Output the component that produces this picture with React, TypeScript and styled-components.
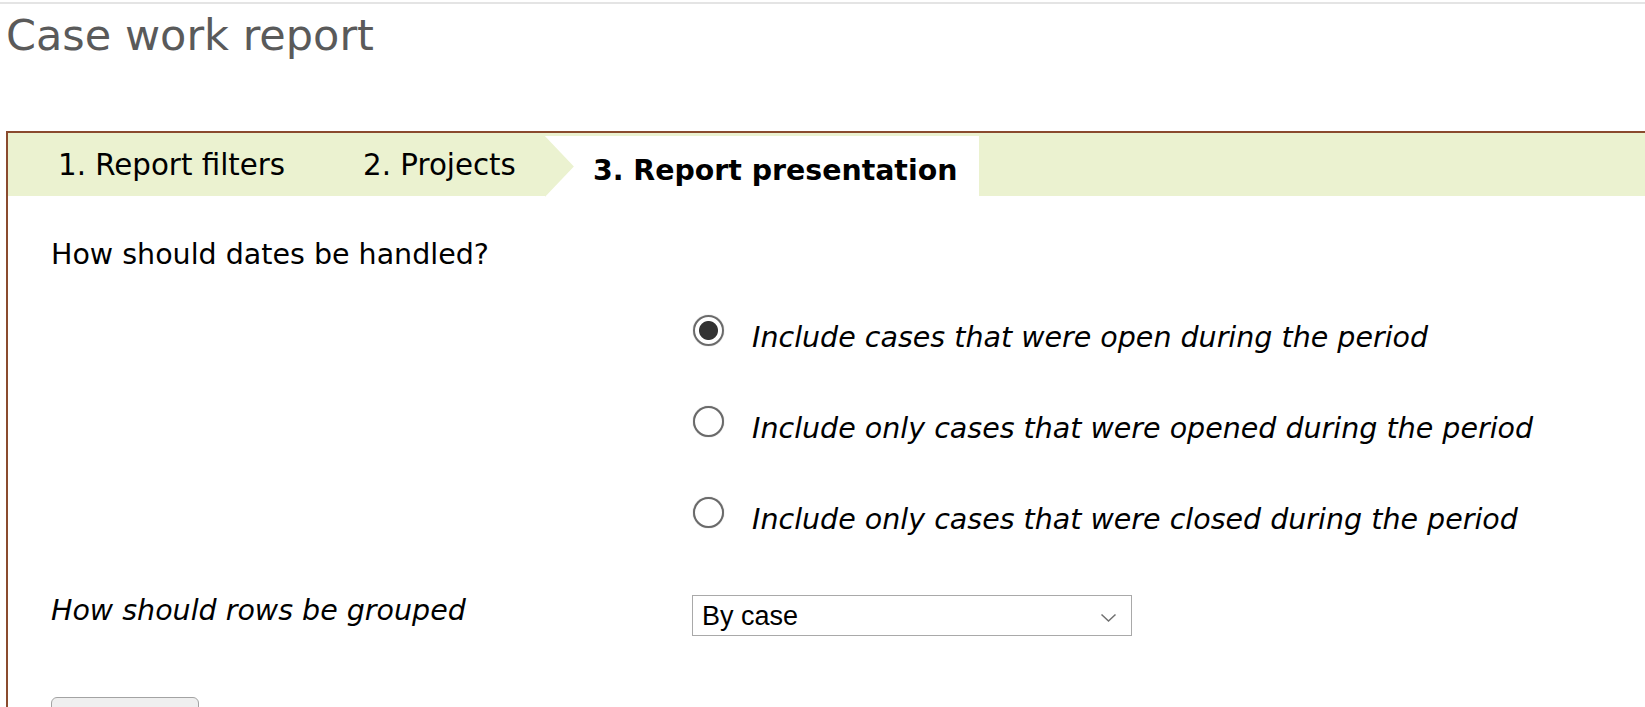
import React from "react";
import styled, { createGlobalStyle } from "styled-components";

const GlobalStyle = createGlobalStyle`
  html, body {
    margin: 0;
    padding: 0;
    background: #ffffff;
  }
  body {
    font-family: Verdana, "DejaVu Sans", sans-serif;
    color: #000000;
    overflow: hidden;
  }
`;

const Page = styled.div`
  display: flex;
  flex-direction: column;
  min-height: 707px;
`;

const TopRule = styled.div`
  height: 2px;
  margin-top: 2px;
  background: #e4e4e4;
`;

const Title = styled.h1`
  margin: 5px 0 70px 6px;
  font-size: 43px;
  line-height: 52px;
  font-weight: normal;
  color: #5a5a5a;
`;

const Panel = styled.section`
  margin-left: 6px;
  border: 2px solid #8a4b2e;
  border-right: none;
  border-bottom: none;
  flex: 1;
  display: flex;
  flex-direction: column;
`;

const TabBar = styled.nav`
  display: flex;
  align-items: stretch;
  height: 63px;
  padding-left: 11px;
  background: #ebf2d0;
`;

const Tab = styled.div`
  padding: 15px 39px 0;
  font-size: 29.3px;
  line-height: 34px;
  white-space: nowrap;
`;

const ActiveTab = styled.div`
  position: relative;
  margin: 3px 0 0 -10px;
  padding: 18px 22px 0 48px;
  background: #ffffff;
  font-size: 28.4px;
  line-height: 34px;
  font-weight: bold;
  white-space: nowrap;

  &::before {
    content: "";
    position: absolute;
    left: 0;
    top: 0;
    width: 29px;
    height: 61px;
    background: #ebf2d0;
    clip-path: polygon(0 0, 100% 50%, 0 100%);
  }
`;

const Body = styled.div`
  padding: 42px 0 0 43px;
  font-size: 28.5px;
  line-height: 34px;
`;

const Question = styled.div``;

const FormRow = styled.div<{ $top: number }>`
  display: grid;
  grid-template-columns: 641px auto;
  align-items: start;
  margin-top: ${(p) => p.$top}px;
`;

const FieldLabel = styled.div`
  font-style: italic;
`;

const RadioList = styled.div`
  display: flex;
  flex-direction: column;
  gap: 51px;
`;

const RadioRow = styled.label`
  display: flex;
  align-items: flex-start;
  gap: 28px;
  cursor: pointer;
`;

const Radio = styled.input.attrs({ type: "radio" })`
  appearance: none;
  -webkit-appearance: none;
  flex: none;
  width: 31px;
  height: 31px;
  margin: 0 0 0 1px;
  border: 2.5px solid #6a6a6a;
  border-radius: 50%;
  background: #ffffff;
  box-shadow: 0 0 1px #9a9a9a;

  &:checked {
    background: radial-gradient(circle, #333333 0 9px, #ffffff 10px);
  }
`;

const RadioText = styled.span`
  padding-top: 6px;
  font-style: italic;
  white-space: nowrap;
`;

const SelectWrap = styled.div`
  position: relative;
  width: 440px;
  margin-top: 1px;
`;

const Select = styled.select`
  appearance: none;
  -webkit-appearance: none;
  display: block;
  width: 100%;
  height: 41px;
  margin: 0;
  padding: 0 40px 0 9px;
  border: 1px solid #a9a9a9;
  border-radius: 0;
  background: #ffffff;
  font-family: Arial, "Liberation Sans", sans-serif;
  font-size: 27px;
  color: #000000;
`;

const Chevron = styled.svg`
  position: absolute;
  right: 15px;
  top: 50%;
  width: 17px;
  height: 10px;
  margin-top: -3px;
  pointer-events: none;
`;

const Actions = styled.div`
  margin-top: 61px;
  padding-bottom: 40px;
`;

const Button = styled.button`
  width: 148px;
  height: 52px;
  padding: 40px 0 0;
  border: 1.5px solid #a3a3a3;
  border-radius: 6px;
  background: #efefef;
  font-family: Verdana, "DejaVu Sans", sans-serif;
  font-size: 26px;
  color: #000000;
`;

const options = [
  "Include cases that were open during the period",
  "Include only cases that were opened during the period",
  "Include only cases that were closed during the period",
];

export default function App() {
  const [choice, setChoice] = React.useState(0);
  return (
    <>
      <GlobalStyle />
      <Page>
        <TopRule />
        <Title>Case work report</Title>
        <Panel>
          <TabBar>
            <Tab>1. Report filters</Tab>
            <Tab>2. Projects</Tab>
            <ActiveTab>3. Report presentation</ActiveTab>
          </TabBar>
          <Body>
            <Question>How should dates be handled?</Question>
            <FormRow $top={43}>
              <div />
              <RadioList>
                {options.map((o, i) => (
                  <RadioRow key={o}>
                    <Radio
                      name="dates"
                      checked={choice === i}
                      onChange={() => setChoice(i)}
                    />
                    <RadioText>{o}</RadioText>
                  </RadioRow>
                ))}
              </RadioList>
            </FormRow>
            <FormRow $top={57}>
              <FieldLabel>How should rows be grouped</FieldLabel>
              <SelectWrap>
                <Select defaultValue="case">
                  <option value="case">By case</option>
                  <option value="project">By project</option>
                  <option value="user">By user</option>
                </Select>
                <Chevron viewBox="0 0 17 10">
                  <path
                    d="M1.5 1.5 L8.5 8 L15.5 1.5"
                    fill="none"
                    stroke="#707070"
                    strokeWidth="1.5"
                  />
                </Chevron>
              </SelectWrap>
            </FormRow>
            <Actions>
              <Button>Next</Button>
            </Actions>
          </Body>
        </Panel>
      </Page>
    </>
  );
}
